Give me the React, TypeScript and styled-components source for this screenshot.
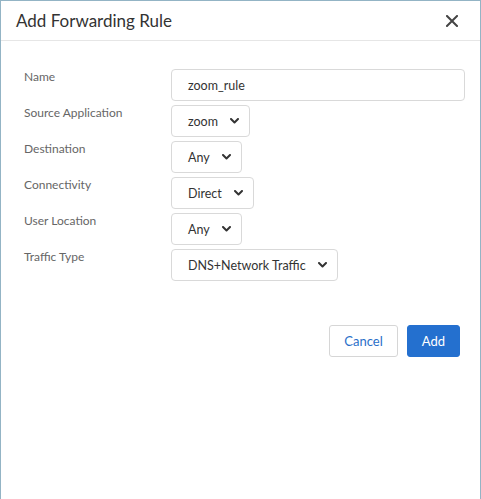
import styled, { createGlobalStyle } from "styled-components";

const GlobalStyle = createGlobalStyle`
	html, body {
		margin: 0;
		padding: 0;
		background: #ffffff;
	}
	body {
		font-family: Lato, "Open Sans", sans-serif;
		-webkit-font-smoothing: antialiased;
	}
`;

type Field = {
	label: string;
	value: string;
	kind: "text" | "select";
};

const fields: Field[] = [
	{ label: "Name", value: "zoom_rule", kind: "text" },
	{ label: "Source Application", value: "zoom", kind: "select" },
	{ label: "Destination", value: "Any", kind: "select" },
	{ label: "Connectivity", value: "Direct", kind: "select" },
	{ label: "User Location", value: "Any", kind: "select" },
	{ label: "Traffic Type", value: "DNS+Network Traffic", kind: "select" },
];

const Chevron = () => (
	<svg width='9' height='6' viewBox='0 0 9 6' aria-hidden='true'>
		<path
			d='M1 1 L4.5 4.5 L8 1'
			fill='none'
			stroke='#333'
			strokeWidth='2'
			strokeLinecap='round'
			strokeLinejoin='round'
		/>
	</svg>
);

const CloseIcon = () => (
	<svg width='12' height='12' viewBox='0 0 12 12' aria-hidden='true'>
		<path
			d='M1 1 L11 11 M11 1 L1 11'
			stroke='#444'
			strokeWidth='2'
			strokeLinecap='square'
		/>
	</svg>
);

const App: React.FC = () => {
	return (
		<>
			<GlobalStyle />
			<Dialog>
				<Header>
					<Title>Add Forwarding Rule</Title>
					<CloseButton aria-label='close'>
						<CloseIcon />
					</CloseButton>
				</Header>
				<Body>
					<Form>
						{fields.map((f) => (
							<Row key={f.label}>
								<Label>{f.label}</Label>
								{f.kind === "text" ? (
									<TextInput>{f.value}</TextInput>
								) : (
									<Select>
										<span>{f.value}</span>
										<Chevron />
									</Select>
								)}
							</Row>
						))}
					</Form>
					<Actions>
						<Button variant='secondary'>Cancel</Button>
						<Button variant='primary'>Add</Button>
					</Actions>
				</Body>
			</Dialog>
		</>
	);
};

export default App;

const Dialog = styled.div`
	width: 481px;
	height: 520px;
	box-sizing: border-box;
	border: 1px solid #93b4c5;
	border-bottom: none;
	background: #fff;
`;

const Header = styled.div`
	height: 39px;
	display: flex;
	align-items: center;
	justify-content: space-between;
	padding: 0 22px 0 15px;
	border-bottom: 1px solid #e6e6e6;
`;

const Title = styled.h2`
	margin: 0;
	font-size: 17px;
	font-weight: 400;
	color: #333;
	padding-bottom: 1px;
`;

const CloseButton = styled.button`
	border: none;
	background: none;
	padding: 0;
	display: flex;
	cursor: pointer;
`;

const Body = styled.div`
	padding: 28px 20px 0 23px;
`;

const Form = styled.div`
	display: flex;
	flex-direction: column;
	gap: 4px;
`;

const Row = styled.div`
	display: grid;
	grid-template-columns: 147px 1fr;
	align-items: start;
`;

const Label = styled.div`
	font-size: 12px;
	line-height: 15px;
	color: #666;
`;

const controlBase = `
	box-sizing: border-box;
	height: 32px;
	border: 1px solid #d9d9d9;
	border-radius: 4px;
	font-size: 12.5px;
	color: #333;
	display: flex;
	align-items: center;
`;

const TextInput = styled.div`
	${controlBase}
	width: 294px;
	padding: 0 16px;
`;

const Select = styled.div`
	${controlBase}
	justify-self: start;
	gap: 12px;
	padding: 0 10px 0 16px;
`;

const Actions = styled.div`
	display: flex;
	justify-content: flex-end;
	gap: 9px;
	margin-top: 44px;
`;

const Button = styled.button<{ variant: "primary" | "secondary" }>`
	height: 32px;
	box-sizing: border-box;
	border-radius: 3px;
	font-family: Lato, "Open Sans", sans-serif;
	font-size: 13px;
	padding: 0 14px;
	cursor: pointer;
	border: 1px solid
		${(p) => (p.variant === "primary" ? "#2470cf" : "#d6d6d6")};
	background: ${(p) => (p.variant === "primary" ? "#2470cf" : "#fff")};
	color: ${(p) => (p.variant === "primary" ? "#fff" : "#2a6fc9")};
`;
